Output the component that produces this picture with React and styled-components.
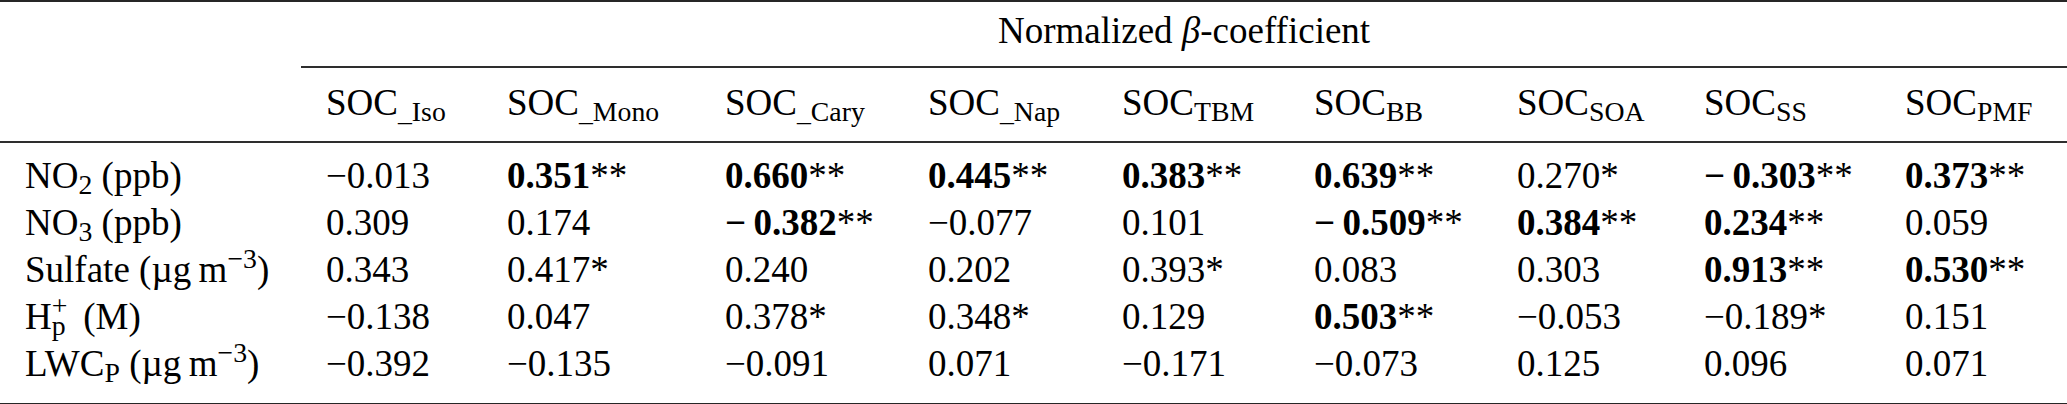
import React from 'react';
import styled, { createGlobalStyle } from 'styled-components';

const GlobalStyle = createGlobalStyle`
  html, body {
    margin: 0;
    padding: 0;
    background: #fff;
  }
  body {
    font-family: "Liberation Serif", "Times New Roman", serif;
    color: #000;
  }
`;

const Table = styled.table`
  width: 2067px;
  table-layout: fixed;
  border-collapse: collapse;
  font-family: "Liberation Serif", "Times New Roman", serif;
  font-size: 37px;
  line-height: 47px;
  color: #000;
`;

const GroupCell = styled.th`
  font-weight: normal;
  text-align: ${(p) => (p.$center ? 'center' : 'left')};
  padding: 5px 0 12px;
  border-top: 2px solid #262626;
  border-bottom: ${(p) => (p.$rule ? '2px solid #2e2e2e' : 'none')};
  white-space: nowrap;
`;

const HeadCell = styled.th`
  font-weight: normal;
  text-align: left;
  padding: 11px 0 15px 25px;
  border-bottom: 2px solid #2e2e2e;
  white-space: nowrap;
`;

const Cell = styled.td`
  text-align: left;
  white-space: nowrap;
  padding: ${(p) => (p.$top ? '9px' : '0')} 0 ${(p) => (p.$last ? '16px' : '0')} 25px;
  border-bottom: ${(p) => (p.$last ? '2px solid #262626' : 'none')};
`;

const Sub = styled.sub`
  font-size: 0.75em;
  line-height: 0;
  vertical-align: -0.2em;
`;

const Sup = styled.sup`
  font-size: 0.75em;
  line-height: 0;
  vertical-align: 0.5em;
`;

/* subscript tucked under a superscript, as in H_p^+ */
const SubUnder = styled(Sub)`
  margin-left: -0.564em;
  margin-right: 0.3em;
`;

const Strong = styled.b`
  font-weight: bold;
`;

const Stars = styled.span`
  font-weight: normal;
`;

const widths = [301, 181, 218, 203, 194, 192, 203, 187, 201, 187];

const heads = [
  ['SOC', '_Iso'],
  ['SOC', '_Mono'],
  ['SOC', '_Cary'],
  ['SOC', '_Nap'],
  ['SOC', 'TBM'],
  ['SOC', 'BB'],
  ['SOC', 'SOA'],
  ['SOC', 'SS'],
  ['SOC', 'PMF'],
];

const unit = (
  <>
    (µg&#8201;m<Sup>−3</Sup>)
  </>
);

const rows = [
  {
    label: (
      <>
        NO<Sub>2</Sub> (ppb)
      </>
    ),
    values: ['−0.013', 'b:0.351:**', 'b:0.660:**', 'b:0.445:**', 'b:0.383:**', 'b:0.639:**', '0.270*', 'b:−\u20090.303:**', 'b:0.373:**'],
  },
  {
    label: (
      <>
        NO<Sub>3</Sub> (ppb)
      </>
    ),
    values: ['0.309', '0.174', 'b:−\u20090.382:**', '−0.077', '0.101', 'b:−\u20090.509:**', 'b:0.384:**', 'b:0.234:**', '0.059'],
  },
  {
    label: <>Sulfate {unit}</>,
    values: ['0.343', '0.417*', '0.240', '0.202', '0.393*', '0.083', '0.303', 'b:0.913:**', 'b:0.530:**'],
  },
  {
    label: (
      <>
        H<Sup>+</Sup>
        <SubUnder>p</SubUnder> (M)
      </>
    ),
    values: ['−0.138', '0.047', '0.378*', '0.348*', '0.129', 'b:0.503:**', '−0.053', '−0.189*', '0.151'],
  },
  {
    label: (
      <>
        LWC<Sub>P</Sub> {unit}
      </>
    ),
    values: ['−0.392', '−0.135', '−0.091', '0.071', '−0.171', '−0.073', '0.125', '0.096', '0.071'],
  },
];

const Value = ({ v }) => {
  if (v.startsWith('b:')) {
    const [, num, stars] = v.split(':');
    return (
      <>
        <Strong>{num}</Strong>
        <Stars>{stars}</Stars>
      </>
    );
  }
  return v;
};

export default function App() {
  return (
    <>
      <GlobalStyle />
      <Table>
        <colgroup>
          {widths.map((w, i) => (
            <col key={i} style={{ width: w }} />
          ))}
        </colgroup>
        <thead>
          <tr>
            <GroupCell />
            <GroupCell colSpan={9} $center $rule>
              Normalized <i>β</i>-coefficient
            </GroupCell>
          </tr>
          <tr>
            <HeadCell />
            {heads.map(([a, b], i) => (
              <HeadCell key={i}>
                {a}
                <Sub>{b}</Sub>
              </HeadCell>
            ))}
          </tr>
        </thead>
        <tbody>
          {rows.map((r, ri) => (
            <tr key={ri}>
              <Cell $top={ri === 0} $last={ri === rows.length - 1}>
                {r.label}
              </Cell>
              {r.values.map((v, ci) => (
                <Cell key={ci} $top={ri === 0} $last={ri === rows.length - 1}>
                  <Value v={v} />
                </Cell>
              ))}
            </tr>
          ))}
        </tbody>
      </Table>
    </>
  );
}
